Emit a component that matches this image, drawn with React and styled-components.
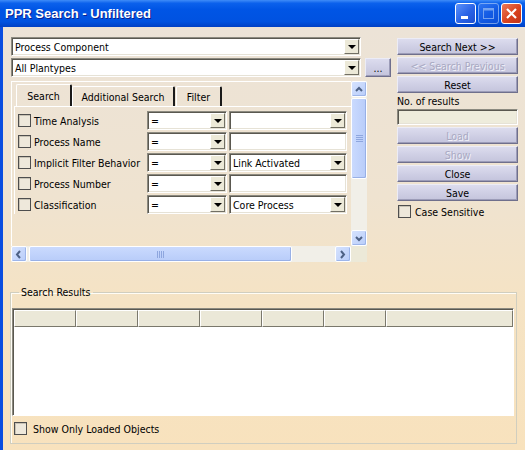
import React from "react"
import styled, { createGlobalStyle } from "styled-components"

const GlobalStyle = createGlobalStyle`
  html, body { margin: 0; padding: 0; }
  body {
    font-family: "DejaVu Sans Condensed", "Liberation Sans", sans-serif;
    font-size: 10.5px;
    color: #000;
  }
`

const Window = styled.div`
  width: 525px;
  height: 450px;
  display: flex;
  flex-direction: column;
  overflow: hidden;
`

const TitleBar = styled.div`
  height: 27px;
  flex: none;
  display: flex;
  align-items: center;
  justify-content: space-between;
  padding: 0 3px 0 5px;
  background: linear-gradient(
    to bottom,
    #3f8cf8 0%,
    #0b61ec 12%,
    #0055e5 35%,
    #0052e0 80%,
    #0040c4 100%
  );
`

const Title = styled.span`
  font-family: "Liberation Sans", "DejaVu Sans", sans-serif;
  font-weight: bold;
  font-size: 13px;
  color: #fff;
  text-shadow: 1px 1px 0 #0b1f8f;
`

const Caption = styled.div`
  display: flex;
  gap: 2px;
`

const CaptionButton = styled.div`
  width: 19px;
  height: 19px;
  border: 1px solid #fff;
  border-radius: 3px;
  display: flex;
  align-items: center;
  justify-content: center;
  background: ${p =>
    p.$close
      ? "linear-gradient(135deg, #ec7a5a, #d9431f 55%, #c1341a)"
      : "linear-gradient(135deg, #5c92fb, #2a63e6 55%, #1d4fd0)"};
  opacity: ${p => (p.$disabled ? 0.45 : 1)};
`

const Body = styled.div`
  flex: 1;
  display: flex;
  flex-direction: column;
  border-left: 3px solid #0a4de0;
  padding: 10px 8px 0 7px;
  background: linear-gradient(
    to bottom,
    #ece3d7 0%,
    #efe3d0 40%,
    #f5e3c4 65%,
    #f8e2bd 100%
  );
`

const Top = styled.div`
  display: flex;
  gap: 6px;
  padding-left: 1px;
`

const LeftCol = styled.div`
  width: 380px;
  display: flex;
  flex-direction: column;
  gap: 2px;
`

const Row = styled.div`
  display: flex;
  align-items: center;
  gap: ${p => p.$gap || 0}px;
`

const Sunken = styled.div`
  box-sizing: border-box;
  width: ${p => p.$w}px;
  height: ${p => p.$h || 19}px;
  background: ${p => p.$bg || "#fff"};
  border: 1px solid;
  border-color: #8c8a80 #fff #fff #8c8a80;
  box-shadow: inset 1px 1px 0 #5a5850, inset -1px -1px 0 #e6e2d6;
  display: flex;
  align-items: center;
  padding: 0 1px 0 3px;
  overflow: hidden;
  white-space: nowrap;
`

const ComboText = styled.span`
  flex: 1;
`

const DropButton = styled.div`
  width: 15px;
  height: 15px;
  flex: none;
  box-sizing: border-box;
  background: #ece9d8;
  border: 1px solid;
  border-color: #fff #716f64 #716f64 #fff;
  display: flex;
  align-items: center;
  justify-content: center;
  &::after {
    content: "";
    border-left: 4px solid transparent;
    border-right: 4px solid transparent;
    border-top: 4px solid #000;
  }
`

const Combo = ({ w, text, drop = true }) => (
  <Sunken $w={w}>
    <ComboText>{text}</ComboText>
    {drop && <DropButton />}
  </Sunken>
)

const Button = styled.div`
  box-sizing: border-box;
  width: ${p => p.$w || 121}px;
  height: ${p => p.$h || 17}px;
  display: flex;
  align-items: center;
  justify-content: center;
  background: linear-gradient(to bottom, #dcdcee, #cdcde3 60%, #c4c4dc);
  border: 1px solid;
  border-color: #ececf6 #6f6f8c #6f6f8c #ececf6;
  box-shadow: inset -1px -1px 0 #9c9cb8;
  color: ${p => (p.$disabled ? "#a9a9c2" : "#000")};
  text-shadow: ${p => (p.$disabled ? "1px 1px 0 #f2f2fa" : "none")};
  white-space: nowrap;
`

const ScrollPanel = styled.div`
  margin-top: 2px;
  width: 356px;
  height: 181px;
  display: grid;
  grid-template-columns: 340px 16px;
  grid-template-rows: 165px 16px;
`

const Content = styled.div`
  border-top: 1px solid #fff;
  border-left: 1px solid #fff;
  overflow: hidden;
  padding: 2px 0 0 2px;
`

const TabStrip = styled.div`
  display: flex;
  align-items: flex-end;
  height: 22px;
  padding-left: 2px;
`

const Tab = styled.div`
  box-sizing: border-box;
  width: ${p => p.$w}px;
  height: ${p => (p.$active ? 22 : 20)}px;
  display: flex;
  align-items: center;
  justify-content: center;
  border-top: 1px solid #fff;
  border-left: 1px solid #fff;
  border-right: 2px solid #1a1a1a;
  border-radius: 2px 2px 0 0;
  margin-right: ${p => (p.$active ? 0 : 1)}px;
`

const TabPage = styled.div`
  border-top: 1px solid #fff;
  border-left: 1px solid #fff;
  padding: 4px 0 0 3px;
  display: grid;
  grid-template-columns: 127px 80px 118px;
  column-gap: 2px;
  row-gap: 2px;
  align-items: center;
`

const CheckCell = styled.label`
  display: flex;
  align-items: center;
  gap: 3px;
  white-space: nowrap;
`

const Check = styled.span`
  box-sizing: border-box;
  width: 13px;
  height: 13px;
  flex: none;
  border: 1px solid #4e4e4e;
  background: #eee8db;
  box-shadow: inset 1px 1px 0 #c8c2b4;
`

const ScrollTrack = styled.div`
  display: flex;
  flex-direction: ${p => (p.$vertical ? "column" : "row")};
  background: #f1efe8;
`

const ScrollArrow = styled.div`
  box-sizing: border-box;
  width: 16px;
  height: 16px;
  flex: none;
  border: 1px solid #fff;
  border-radius: 2px;
  background: linear-gradient(135deg, #d5e2fe, #b9cdf9);
  box-shadow: inset -1px -1px 0 #9db5ea;
  display: flex;
  align-items: center;
  justify-content: center;
`

const Thumb = styled.div`
  box-sizing: border-box;
  flex: none;
  ${p => (p.$vertical ? `height: ${p.$size}px; margin-top: 1px;` : `width: ${p.$size}px; margin-left: 2px;`)}
  border: 1px solid #fff;
  border-radius: 2px;
  background: ${p =>
    p.$vertical
      ? "linear-gradient(to right, #cadafe, #b8ccf9)"
      : "linear-gradient(to bottom, #cadafe, #b8ccf9)"};
  box-shadow: inset -1px -1px 0 #98b0e6;
  display: flex;
  align-items: center;
  justify-content: center;
`

const Grip = styled.div`
  display: flex;
  flex-direction: ${p => (p.$vertical ? "column" : "row")};
  gap: 1px;
  & > span {
    display: block;
    background: #8ea6de;
    ${p => (p.$vertical ? "width: 7px; height: 1px;" : "width: 1px; height: 7px;")}
  }
`

const Spacer = styled.div`
  flex: 1;
`

const Corner = styled.div`
  background: #ece9d8;
`

const Chevron = ({ dir }) => {
  const pts = {
    up: "2,6 5,3 8,6",
    down: "2,3 5,6 8,3",
    left: "6,1 3,4.5 6,8",
    right: "3,1 6,4.5 3,8",
  }[dir]
  return (
    <svg width="10" height="9" viewBox="0 0 10 9">
      <polyline points={pts} fill="none" stroke="#4d6185" strokeWidth="2" />
    </svg>
  )
}

const RightCol = styled.div`
  width: 121px;
  padding-top: 1px;
  display: flex;
  flex-direction: column;
  gap: 2px;
`

const SmallLabel = styled.div`
  height: 12px;
  line-height: 12px;
`

const CheckRow = styled.label`
  display: flex;
  align-items: center;
  gap: ${p => p.$gap || 4}px;
  margin-top: ${p => p.$mt || 0}px;
  padding-left: ${p => p.$pl || 0}px;
`

const Group = styled.fieldset`
  margin: 24px 0 0 0;
  width: 507px;
  box-sizing: border-box;
  padding: 10px 2px 0 1px;
  border: 1px solid #d0cebf;
  box-shadow: inset 1px 1px 0 #fffdf6;
  height: 158px;
`

const Legend = styled.legend`
  padding: 0 2px;
  margin-left: 7px;
`

const Table = styled.div`
  box-sizing: border-box;
  width: 502px;
  height: 108px;
  background: #fff;
  border: 1px solid;
  border-color: #8c8a80 #fff #fff #8c8a80;
  box-shadow: inset 1px 1px 0 #5a5850;
  padding: 1px 0 0 1px;
`

const HeaderRow = styled.div`
  display: grid;
  grid-template-columns: repeat(6, 62px) 1fr;
  height: 17px;
`

const HeaderCell = styled.div`
  box-sizing: border-box;
  background: #ebe8d8;
  border: 1px solid;
  border-color: #fff #7a786c #7a786c #fff;
`

const columns = [0, 1, 2, 3, 4, 5, 6]

const rows = [
  { label: "Time Analysis", value: "", drop: true },
  { label: "Process Name", value: "", drop: false },
  { label: "Implicit Filter Behavior", value: "Link Activated", drop: true },
  { label: "Process Number", value: "", drop: false },
  { label: "Classification", value: "Core Process", drop: true },
]

export default function App() {
  return (
    <Window>
      <GlobalStyle />
      <TitleBar>
        <Title>PPR Search - Unfiltered</Title>
        <Caption>
          <CaptionButton>
            <svg width="19" height="19" viewBox="0 0 19 19">
              <rect x="5" y="12" width="7" height="3" fill="#fff" />
            </svg>
          </CaptionButton>
          <CaptionButton $disabled>
            <svg width="19" height="19" viewBox="0 0 19 19">
              <rect x="4.5" y="4.5" width="10" height="10" fill="none" stroke="#fff" strokeWidth="1" />
              <rect x="4.5" y="4.5" width="10" height="2" fill="#fff" />
            </svg>
          </CaptionButton>
          <CaptionButton $close>
            <svg width="19" height="19" viewBox="0 0 19 19">
              <path d="M5 5 L14 14 M14 5 L5 14" stroke="#fff" strokeWidth="2.2" />
            </svg>
          </CaptionButton>
        </Caption>
      </TitleBar>

      <Body>
        <Top>
          <LeftCol>
            <Combo w={350} text="Process Component" />
            <Row $gap={4}>
              <Combo w={350} text="All Plantypes" />
              <Button $w={26} $h={19}>...</Button>
            </Row>
            <ScrollPanel>
              <Content>
                <TabStrip>
                  <Tab $w={56} $active>Search</Tab>
                  <Tab $w={103}>Additional Search</Tab>
                  <Tab $w={46}>Filter</Tab>
                </TabStrip>
                <TabPage>
                  {rows.map(r => (
                    <React.Fragment key={r.label}>
                      <CheckCell>
                        <Check />
                        {r.label}
                      </CheckCell>
                      <Combo w={80} text="=" />
                      <Combo w={118} text={r.value} drop={r.drop} />
                    </React.Fragment>
                  ))}
                </TabPage>
              </Content>
              <ScrollTrack $vertical>
                <ScrollArrow><Chevron dir="up" /></ScrollArrow>
                <Thumb $vertical $size={81}>
                  <Grip $vertical><span /><span /><span /><span /></Grip>
                </Thumb>
                <Spacer />
                <ScrollArrow><Chevron dir="down" /></ScrollArrow>
              </ScrollTrack>
              <ScrollTrack>
                <ScrollArrow><Chevron dir="left" /></ScrollArrow>
                <Thumb $size={263}>
                  <Grip><span /><span /><span /><span /></Grip>
                </Thumb>
                <Spacer />
                <ScrollArrow><Chevron dir="right" /></ScrollArrow>
              </ScrollTrack>
              <Corner />
            </ScrollPanel>
          </LeftCol>

          <RightCol>
            <Button>Search Next &gt;&gt;</Button>
            <Button $disabled>&lt;&lt; Search Previous</Button>
            <Button>Reset</Button>
            <SmallLabel>No. of results</SmallLabel>
            <Sunken $w={121} $h={16} $bg="#eeecdc" />
            <Button $disabled>Load</Button>
            <Button $disabled>Show</Button>
            <Button>Close</Button>
            <Button>Save</Button>
            <CheckRow $mt={2} $pl={1}>
              <Check />
              Case Sensitive
            </CheckRow>
          </RightCol>
        </Top>

        <Group>
          <Legend>Search Results</Legend>
          <Table>
            <HeaderRow>
              {columns.map(c => (
                <HeaderCell key={c} />
              ))}
            </HeaderRow>
          </Table>
          <CheckRow $mt={6} $pl={2} $gap={6}>
            <Check />
            Show Only Loaded Objects
          </CheckRow>
        </Group>
      </Body>
    </Window>
  )
}
